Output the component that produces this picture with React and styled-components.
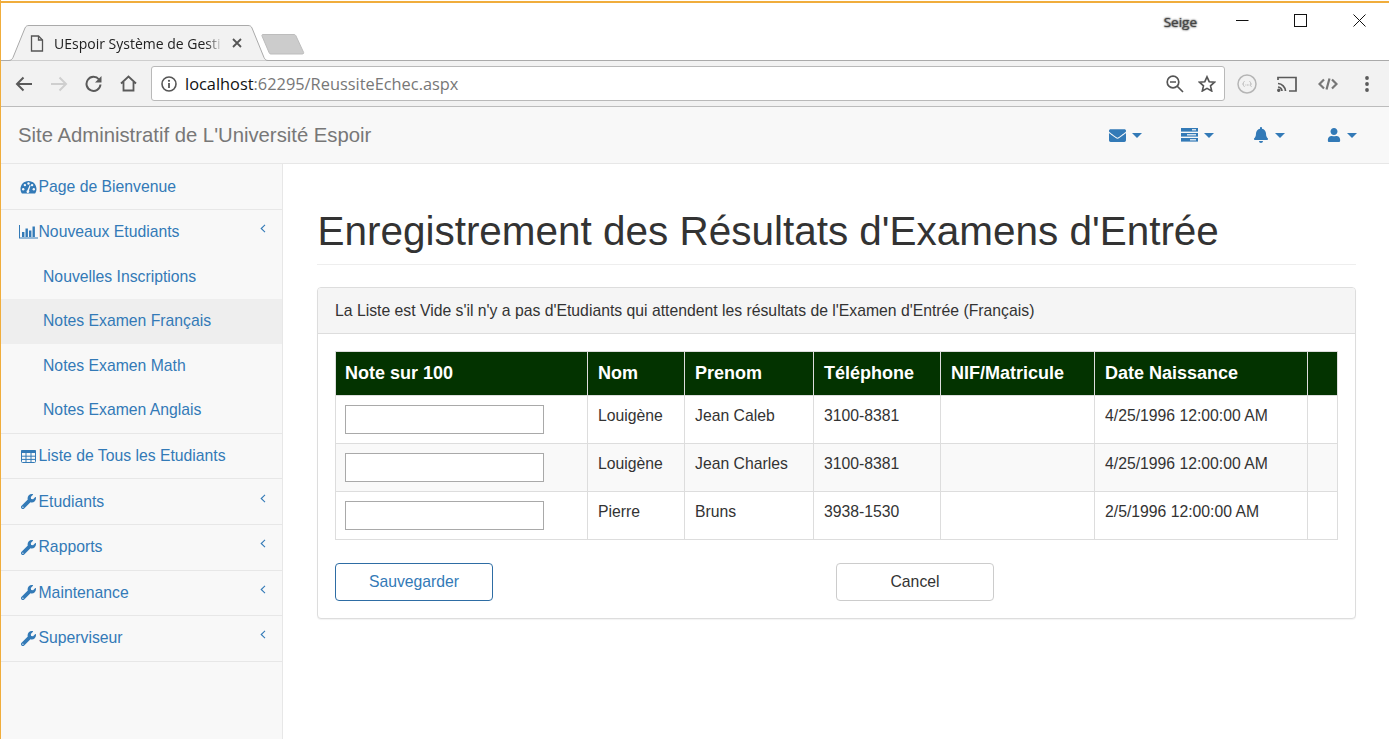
import React from "react";
import styled, { createGlobalStyle } from "styled-components";
import { FaWrench, FaEnvelope, FaBell, FaUser } from "react-icons/fa";

const Global = createGlobalStyle`
  html, body { margin: 0; padding: 0; background: #fff; }
  * { box-sizing: border-box; }
`;

const Page = styled.div`
  width: 1389px; height: 739px; overflow: hidden; display: flex; flex-direction: column;
  background: #fff; border-left: 1px solid #f0ad3c; padding-top: 1px;
  font-family: "Liberation Sans", Arial, sans-serif; font-size: 15.75px; color: #333;
`;
const OrangeLine = styled.div`height: 2px; background: #f0ad3c; margin-left: -1px; flex: none;`;
const TitleBar = styled.div`
  height: 58px; flex: none; display: flex; align-items: flex-end; position: relative;
  border-bottom: 1px solid #aaa; padding-left: 7px;
`;
const Tab = styled.div`
  position: relative; width: 260px; height: 36px; margin-bottom: -1px; display: flex; align-items: center;
  padding-left: 22px; font-family: "Open Sans", "Noto Sans", sans-serif; font-size: 14px; color: #222; z-index: 1;
`;
const TabShape = styled.svg`position: absolute; left: 0; top: 0; z-index: -1;`;
const TabTitle = styled.span`
  margin-left: 10px; width: 169px; white-space: nowrap;
  -webkit-mask-image: linear-gradient(to right, #000 90%, transparent);
  mask-image: linear-gradient(to right, #000 90%, transparent);
`;
const TabClose = styled.svg`margin-left: 9px; flex: none;`;
const NewTab = styled.svg`margin: 0 0 5px -7px; flex: none;`;
const UserName = styled.div`
  margin-left: auto; align-self: flex-start; margin-top: 10px; margin-right: 39px; font-family: "Open Sans", sans-serif; font-size: 13.5px; color: #444;
  text-shadow: 0 0 2px #777, 0 0 2px #777, 0 0 1px #888;
`;
const WinBtn = styled.svg`align-self: flex-start; margin-top: 11px; margin-right: ${p => p.$mr}px; flex: none;`;

const Toolbar = styled.div`
  height: 46px; flex: none; background: #f2f2f2; border-bottom: 1px solid #bcbcbc; display: flex; align-items: center; padding-left: 14px;
`;
const ToolSvg = styled.svg`flex: none; margin-right: ${p => p.$mr ?? 0}px; margin-left: ${p => p.$ml ?? 0}px;`;
const OmniEnd = styled(ToolSvg)`margin-left: auto;`;
const Omnibox = styled.div`
  width: 1074px; height: 35px; flex: none; margin-left: 14px; background: #fff; border: 1px solid #b9b9b9; border-radius: 3px;
  display: flex; align-items: center; padding-left: 9px; font-family: "Open Sans", sans-serif; font-size: 16.36px; color: #777;
`;
const Host = styled.span`color: #111; margin-left: 8px;`;

const Navbar = styled.div`
  height: 57px; flex: none; background: #f8f8f8; border-bottom: 1px solid #e7e7e7; display: flex; align-items: center; padding-left: 17px;
`;
const Brand = styled.div`font-size: 20.3px; color: #777; margin-right: auto;`;
const NavDrop = styled.div`
  display: flex; align-items: center; gap: 6px; color: #337ab7; margin-right: ${p => p.$mr}px; font-size: 16px;
`;
const Caret = styled.span`
  width: 0; height: 0; border-left: 5px solid transparent; border-right: 5px solid transparent; border-top: 5px solid #337ab7;
`;

const Body = styled.div`flex: 1; display: flex; min-height: 0;`;
const Sidebar = styled.nav`
  width: 282px; flex: none; background: #f8f8f8; border-right: 1px solid #e7e7e7; padding-top: .4px;
`;
const Row = styled.div`
  height: 45.6px; display: flex; align-items: center; padding: 0 15px 0 18px; border-bottom: 1px solid #e7e7e7; color: #337ab7; position: relative;
`;
const OpenGroup = styled.div`border-bottom: 1px solid #e7e7e7;`;
const GroupHead = styled(Row)`border-bottom: 0; height: 44.4px;`;
const SubRow = styled.div`
  height: 44.6px; display: flex; align-items: center; padding-left: 42px; color: #337ab7; background: ${p => p.$active ? "#eee" : "transparent"};
`;
const IconBox = styled.span`
  width: 19px; flex: none; display: flex; justify-content: center; align-items: center; margin-right: .5px; font-size: 14.5px;
`;
const Chevron = styled.svg`margin-left: auto; margin-right: 1px; margin-top: -7px; flex: none;`;

const Main = styled.main`flex: 1; padding: 0 33px 0 34px; min-width: 0;`;
const Heading = styled.h1`
  margin: 45px 0 22px; padding-bottom: 10px; border-bottom: 1px solid #eee; font-weight: 500; font-size: 40.46px; line-height: 45px; color: #333; text-indent: .5px;
`;
const Panel = styled.section`
  border: 1px solid #ddd; border-radius: 4px; box-shadow: 0 1px 1px rgba(0,0,0,.05); background: #fff;
`;
const PanelHead = styled.div`
  height: 46px; background: #f5f5f5; border-bottom: 1px solid #ddd; padding: 0 17px; display: flex; align-items: center; border-radius: 3px 3px 0 0;
`;
const PanelBody = styled.div`padding: 17px 17px 17px;`;
const Table = styled.table`
  width: 1002px; table-layout: fixed; border-collapse: collapse; margin-bottom: 23px;
`;
const Th = styled.th`
  height: 44px; padding: 0 10px; background: #033300; color: #fff; font-size: 18px; font-weight: 700; text-align: left; border: 1px solid #ddd;
  &:first-child { padding-left: 9px; }
`;
const Td = styled.td`
  height: 48px; padding: 9px 10px; vertical-align: top; border: 1px solid #ddd; line-height: 22.8px;
  background: ${p => p.$striped ? "#f9f9f9" : "#fff"};
  &:first-child { padding-left: 9px; }
`;
const NoteInput = styled.input`
  display: block; width: 199px; height: 29px; border: 1px solid #a9a9a9; background: #fff; padding: 0 2px; margin: 0;
`;
const Actions = styled.div`display: grid; grid-template-columns: 501px 1fr;`;
const Btn = styled.button`
  width: 158px; height: 38px; background: #fff; border-radius: 4px; font: 15.75px "Liberation Sans", Arial, sans-serif;
  border: 1px solid ${p => p.$primary ? "#2e6da4" : "#ccc"}; color: ${p => p.$primary ? "#337ab7" : "#333"}; padding: 0;
`;

const Caption = styled.col``;

const Gauge = () => (
  <svg width="17" height="14" viewBox="0 0 17 14">
    <path d="M8.5 1C3.9 1 .5 4.6.5 9c0 1.7.5 3.2 1.2 4.2.2.3.5.4.9.4h11.8c.4 0 .7-.1.9-.4.7-1 1.2-2.5 1.2-4.2 0-4.4-3.4-8-8-8z" fill="#337ab7" />
    <g fill="#f8f8f8">
      <circle cx="3.2" cy="9.3" r="1.2" /><circle cx="4.9" cy="5.1" r="1.2" /><circle cx="8.5" cy="3.5" r="1.2" />
      <circle cx="12.1" cy="5.1" r="1.2" /><circle cx="13.8" cy="9.3" r="1.2" />
      <path d="M7.4 10.2 9.7 5l.9.4-1.6 5.2a1.4 1.4 0 1 1-1.6-.4z" />
    </g>
  </svg>
);
const Bars = () => (
  <svg width="19" height="14" viewBox="0 0 19 14" fill="#337ab7">
    <path d="M0 0h1v12.5h18v1H0z" />
    <rect x="3" y="7" width="2.4" height="5" /><rect x="6.5" y="3.5" width="2.4" height="8.5" />
    <rect x="10" y="5.5" width="2.4" height="6.5" /><rect x="13.5" y="1.5" width="2.4" height="10.5" />
  </svg>
);
const Tasks = () => (
  <svg width="17" height="14" viewBox="0 0 17 14">
    <rect y="0" width="17" height="3.6" fill="#337ab7" /><rect y="5" width="17" height="3.6" fill="#337ab7" /><rect y="10" width="17" height="3.6" fill="#337ab7" />
    <rect x="11" y="1.2" width="4" height="1.2" fill="#f8f8f8" /><rect x="6" y="6.2" width="9" height="1.2" fill="#f8f8f8" /><rect x="9" y="11.2" width="6" height="1.2" fill="#f8f8f8" />
  </svg>
);
const Grid = () => (
  <svg width="15" height="13" viewBox="0 0 15 13">
    <rect x=".5" y=".5" width="14" height="12" rx="1" fill="none" stroke="#337ab7" />
    <rect x="0" y="0" width="15" height="3" rx="1" fill="#337ab7" />
    <path d="M0 6.200h15M0 9.400h15M5 2v11M10 2v11" stroke="#337ab7" strokeWidth="1" />
  </svg>
);
const Chev = () => (
  <Chevron width="6" height="9" viewBox="0 0 6 9"><path d="M5 .8 1.2 4.5 5 8.2" fill="none" stroke="#337ab7" strokeWidth="1.1" /></Chevron>
);

const columns = [252, 97, 129, 127, 154, 213, 30];
const headers = ["Note sur 100", "Nom", "Prenom", "Téléphone", "NIF/Matricule", "Date Naissance", ""];
const students = [
  ["Louigène", "Jean Caleb", "3100-8381", "", "4/25/1996 12:00:00 AM", ""],
  ["Louigène", "Jean Charles", "3100-8381", "", "4/25/1996 12:00:00 AM", ""],
  ["Pierre", "Bruns", "3938-1530", "", "2/5/1996 12:00:00 AM", ""],
];
const closedItems = ["Etudiants", "Rapports", "Maintenance", "Superviseur"];
const subItems = ["Nouvelles Inscriptions", "Notes Examen Français", "Notes Examen Math", "Notes Examen Anglais"];

export default function App() {
  return (
    <Page>
      <Global />
      <OrangeLine />
      <TitleBar>
        <Tab>
          <TabShape width="260" height="36" viewBox="0 0 260 36">
            <path d="M.5 35.5C3 35.5 4 34.5 5 32.5L17 3C18 1 19 .5 21 .5H240C242 .5 243 1 244 3L256 32.5C257 34.5 258 35.5 260 35.5" fill="#f2f2f2" stroke="#aaa" />
          </TabShape>
          <svg width="14" height="17" viewBox="0 0 14 17" fill="none" stroke="#555" strokeWidth="1.3">
            <path d="M1.5 1h7l4 4v11h-11z" /><path d="M8.5 1v4h4" />
          </svg>
          <TabTitle>UEspoir Système de Gesti</TabTitle>
          <TabClose width="10" height="10" viewBox="0 0 10 10"><path d="M1 1l8 8M9 1l-8 8" stroke="#555" strokeWidth="1.8" /></TabClose>
        </Tab>
        <NewTab width="44" height="22" viewBox="0 0 44 22">
          <path d="M2 1.5C1 1.5.7 2 1 3l7 16.500c.4 1 1 1.500 2 1.500h31c1.300 0 2-.7 1.600-1.600L35 3c-.5-1-1-1.500-2-1.500z" fill="#ccc" stroke="#bdbdbd" />
        </NewTab>
        <UserName>Seige</UserName>
        <WinBtn $mr={45} width="13" height="12" viewBox="0 0 13 12"><path d="M0 6.500h12.500" stroke="#111" /></WinBtn>
        <WinBtn $mr={46} width="13" height="13" viewBox="0 0 13 13"><rect x=".5" y=".5" width="12" height="12" fill="none" stroke="#111" /></WinBtn>
        <WinBtn $mr={23} width="13" height="13" viewBox="0 0 13 13"><path d="M.5.5l12 12M12.500.5l-12 12" stroke="#111" /></WinBtn>
      </TitleBar>
      <Toolbar>
        <ToolSvg $mr={17} width="18" height="16" viewBox="0 0 18 16" fill="none" stroke="#5a5a5a" strokeWidth="2"><path d="M17 8H2.500M8.500 1.500 2 8l6.500 6.500" /></ToolSvg>
        <ToolSvg $mr={17} width="18" height="16" viewBox="0 0 18 16" fill="none" stroke="#cfcfcf" strokeWidth="2"><path d="M1 8h14.500M9.500 1.500 16 8l-6.500 6.500" /></ToolSvg>
        <ToolSvg $mr={18} width="17" height="17" viewBox="0 0 17 17" fill="none"><path d="M14 4.500A7 7 0 1 0 15.500 9.500" stroke="#5a5a5a" strokeWidth="2" /><path d="M16.500 1v6.500H10z" fill="#5a5a5a" /></ToolSvg>
        <ToolSvg width="17" height="17" viewBox="0 0 17 17" fill="none" stroke="#5a5a5a" strokeWidth="1.8"><path d="M1 8.500 8.500 1.500 16 8.500M3.500 7v8.500h10V7" /></ToolSvg>
        <Omnibox>
          <svg width="16" height="16" viewBox="0 0 16 16" fill="none"><circle cx="8" cy="8" r="7" stroke="#555" strokeWidth="1.6" /><path d="M8 7v5" stroke="#555" strokeWidth="1.8" /><circle cx="8" cy="4.800" r="1.100" fill="#555" /></svg>
          <Host>localhost</Host><span>:62295/ReussiteEchec.aspx</span>
          <OmniEnd $mr={14} width="18" height="18" viewBox="0 0 18 18" fill="none" stroke="#555" strokeWidth="1.7"><circle cx="7" cy="7" r="5.800" /><path d="M4 7h6M11 11l6 6" /></OmniEnd>
          <ToolSvg $mr={8} width="18" height="17" viewBox="0 0 18 17" fill="none" stroke="#555" strokeWidth="1.6"><path d="M9 1.800l2.200 4.900 5.300.5-4 3.600 1.200 5.200L9 13.300 4.300 16l1.200-5.200-4-3.600 5.300-.5z" /></ToolSvg>
        </Omnibox>
        <ToolSvg $ml={12} width="20" height="20" viewBox="0 0 20 20" fill="none"><circle cx="10" cy="10" r="9" stroke="#b5b5b5" strokeWidth="1.500" /><path d="M7.500 7.500c-1 0-1 1-1 1.500s0 1-1 1c1 0 1 .5 1 1s0 1.500 1 1.500M12.500 7.500c1 0 1 1 1 1.500s0 1 1 1c-1 0-1 .5-1 1s0 1.500 1 1.500" stroke="#bbb" /><path d="M8.500 11h.8M10 11h.8M11.500 11h.8" stroke="#aaa" /></ToolSvg>
        <ToolSvg $ml={20} width="20" height="16" viewBox="0 0 20 16" fill="none" stroke="#5a5a5a" strokeWidth="1.700"><path d="M1 4V1.500h18v13.500h-7" /><path d="M1 7.500a8 8 0 0 1 7.500 7.500M1 11a4.500 4.500 0 0 1 4 4" /><circle cx="1.800" cy="14.200" r=".9" fill="#5a5a5a" /></ToolSvg>
        <ToolSvg $ml={21} width="20" height="12" viewBox="0 0 20 12" fill="none" stroke="#777" strokeWidth="2.200"><path d="M6 1.500 1.500 6 6 10.500M14 1.500 18.500 6 14 10.500M11.500 .5 8.500 11.500" /></ToolSvg>
        <ToolSvg $ml={27} width="4" height="16" viewBox="0 0 4 16" fill="#5a5a5a"><circle cx="2" cy="2" r="1.900" /><circle cx="2" cy="8" r="1.900" /><circle cx="2" cy="14" r="1.900" /></ToolSvg>
      </Toolbar>
      <Navbar>
        <Brand>Site Administratif de L'Université Espoir</Brand>
        <NavDrop $mr={39}><FaEnvelope size={17} /><Caret /></NavDrop>
        <NavDrop $mr={39}><Tasks /><Caret /></NavDrop>
        <NavDrop $mr={42}><FaBell size={16} /><Caret /></NavDrop>
        <NavDrop $mr={32}><FaUser size={14} /><Caret /></NavDrop>
      </Navbar>
      <Body>
        <Sidebar>
          <Row><IconBox><Gauge /></IconBox>Page de Bienvenue</Row>
          <OpenGroup>
            <GroupHead><IconBox><Bars /></IconBox>Nouveaux Etudiants<Chev /></GroupHead>
            {subItems.map((s, i) => <SubRow key={s} $active={i === 1}>{s}</SubRow>)}
          </OpenGroup>
          <Row><IconBox><Grid /></IconBox>Liste de Tous les Etudiants</Row>
          {closedItems.map(s => <Row key={s}><IconBox><FaWrench size={15} /></IconBox>{s}<Chev /></Row>)}
        </Sidebar>
        <Main>
          <Heading>Enregistrement des Résultats d'Examens d'Entrée</Heading>
          <Panel>
            <PanelHead>La Liste est Vide s'il n'y a pas d'Etudiants qui attendent les résultats de l'Examen d'Entrée (Français)</PanelHead>
            <PanelBody>
              <Table>
                <colgroup>{columns.map((w, i) => <Caption key={i} width={w} />)}</colgroup>
                <thead><tr>{headers.map((h, i) => <Th key={i}>{h}</Th>)}</tr></thead>
                <tbody>
                  {students.map((s, r) => (
                    <tr key={r}>
                      <Td $striped={r === 1}><NoteInput type="text" /></Td>
                      {s.map((c, i) => <Td key={i} $striped={r === 1}>{c}</Td>)}
                    </tr>
                  ))}
                </tbody>
              </Table>
              <Actions>
                <Btn $primary>Sauvegarder</Btn>
                <Btn>Cancel</Btn>
              </Actions>
            </PanelBody>
          </Panel>
        </Main>
      </Body>
    </Page>
  );
}
